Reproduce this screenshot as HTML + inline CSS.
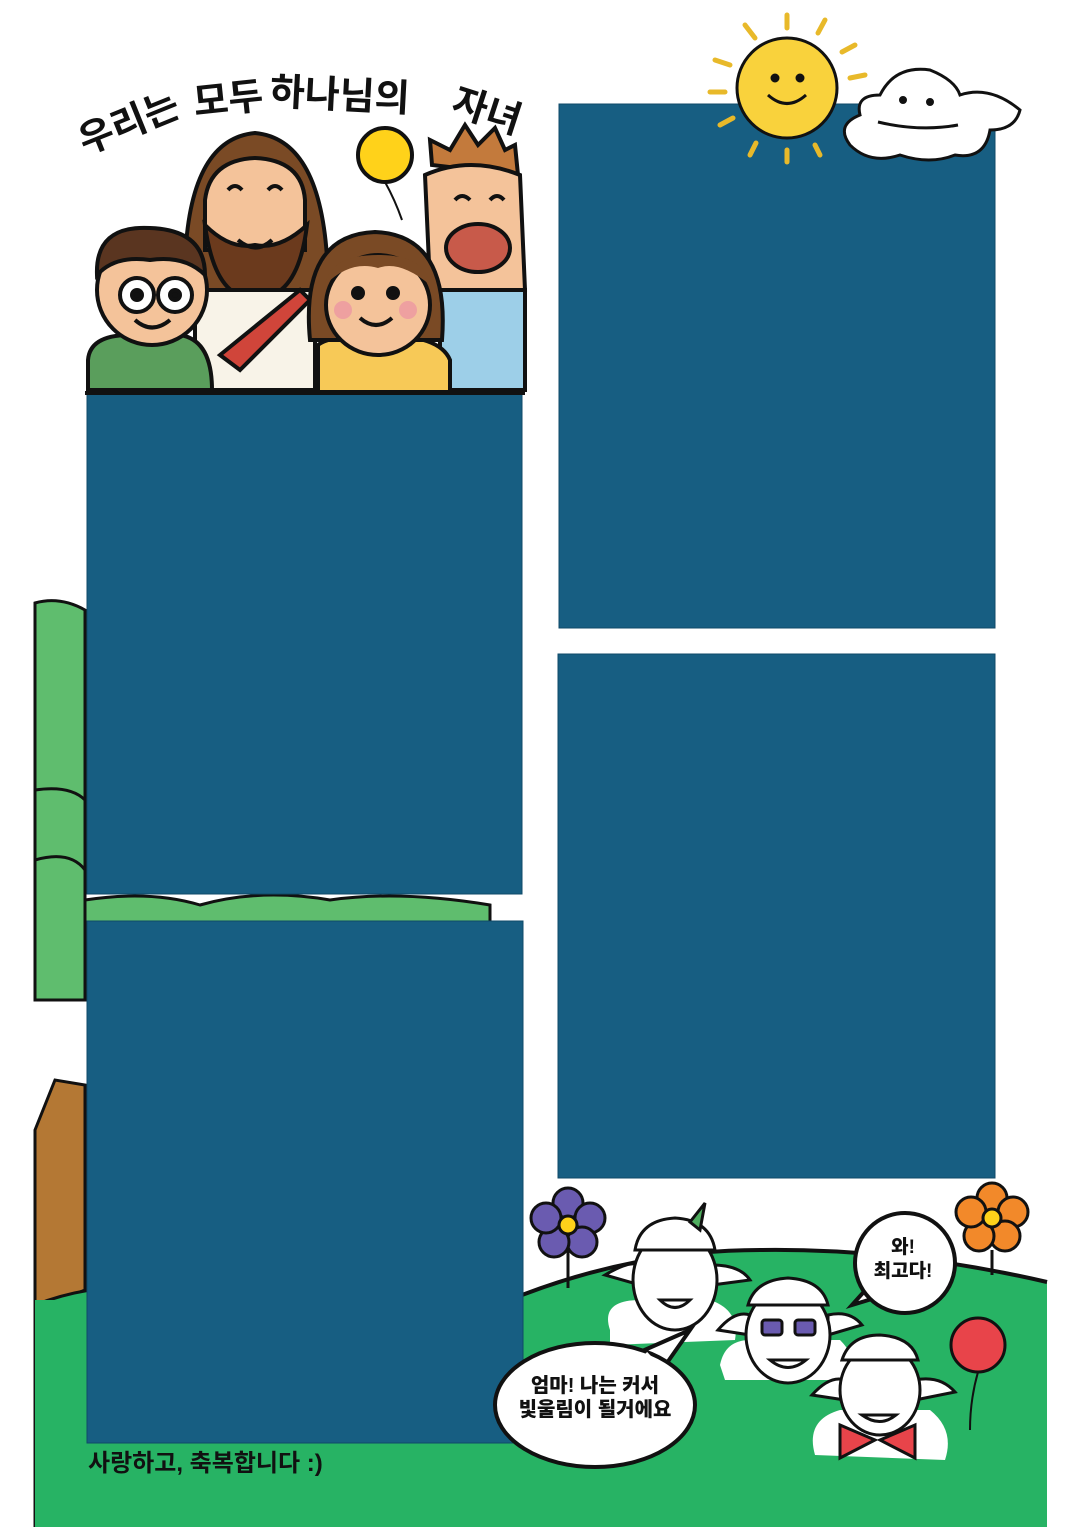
<!DOCTYPE html>
<html><head><meta charset="utf-8"><style>
html,body{margin:0;padding:0;background:#fff}
body{width:1080px;height:1527px;position:relative;overflow:hidden;font-family:"Liberation Sans","Noto Sans CJK KR",sans-serif}
.t{position:absolute;font-weight:bold;color:#111;white-space:nowrap}
</style></head><body>
<svg width="1080" height="1527" viewBox="0 0 1080 1527" style="position:absolute;left:0;top:0">
<g stroke="#111" stroke-width="3">
<path d="M35 603 Q60 596 85 610 L85 1000 L35 1000 Z" fill="#5fbd6e"/>
<path d="M35 790 Q70 785 85 800 M35 860 Q70 850 85 870" fill="none"/>
<path d="M85 900 Q150 890 200 905 Q260 888 330 900 Q400 890 490 905 L490 925 L85 925 Z" fill="#5fbd6e"/>
<path d="M35 1130 L55 1080 L85 1085 L85 1290 L35 1310 Z" fill="#b47834"/>
</g>
<path d="M35 1305 Q60 1295 90 1290 L90 1527 L35 1527 Z" fill="#27b364" stroke="#111" stroke-width="3"/>
<rect x="35" y="1300" width="500" height="227" fill="#27b364"/>
<path d="M522 1295 Q640 1250 760 1250 Q900 1248 1047 1282 L1047 1527 L522 1527 Z" fill="#27b364"/>
<path d="M522 1295 Q640 1250 760 1250 Q900 1248 1047 1282" fill="none" stroke="#111" stroke-width="4"/>
<g fill="#175e82" stroke="#0f4a68" stroke-width="1">
<rect x="87" y="393" width="435" height="501"/>
<rect x="87" y="921" width="436" height="522"/>
<rect x="559" y="104" width="436" height="524"/>
<rect x="558" y="654" width="437" height="524"/>
</g>
<g stroke="#111" stroke-width="4">
<circle cx="385" cy="155" r="27" fill="#ffd21a"/>
<path d="M385 182 Q395 200 402 220" fill="none" stroke-width="2"/>
<path d="M185 300 Q180 140 255 133 Q330 140 328 300 Z" fill="#7a4a25"/>
<path d="M205 200 Q210 160 255 158 Q302 160 305 200 L305 250 L205 250 Z" fill="#f4c39a"/>
<path d="M205 225 Q215 300 255 298 Q298 300 307 225 Q280 250 255 245 Q230 250 205 225Z" fill="#6b3a1d"/>
<path d="M195 290 L315 290 L315 390 L195 390 Z" fill="#f8f3e8"/>
<path d="M300 290 L220 355 L240 370 L310 300 Z" fill="#d0453a"/>
<path d="M432 165 L430 140 L450 150 L465 125 L478 145 L495 128 L505 150 L515 145 L518 175 Z" fill="#c37a3c"/>
<path d="M425 175 Q470 155 520 175 L525 290 Q470 310 430 285 Z" fill="#f4c39a"/>
<ellipse cx="478" cy="248" rx="32" ry="24" fill="#c85a4a"/>
<path d="M440 290 L525 290 L525 390 L440 390 Z" fill="#9dcfe8"/>
<path d="M88 360 Q90 335 130 335 L180 335 Q212 340 212 390 L88 390 Z" fill="#5a9e5c"/>
<circle cx="152" cy="290" r="55" fill="#f4c39a"/>
<path d="M97 275 Q95 225 150 228 Q205 230 205 275 Q185 255 150 260 Q115 255 97 275Z" fill="#5a3520"/>
<circle cx="137" cy="295" r="17" fill="#fff"/><circle cx="175" cy="295" r="17" fill="#fff"/>
<circle cx="137" cy="295" r="5" fill="#111"/><circle cx="175" cy="295" r="5" fill="#111"/>
<path d="M135 320 Q152 335 170 320" fill="none"/>
<path d="M318 345 Q330 335 380 335 Q440 335 450 360 L450 392 L318 392 Z" fill="#f7c957"/>
<path d="M310 340 Q300 235 375 232 Q450 235 442 340 Z" fill="#7a4a25"/>
<ellipse cx="378" cy="305" rx="52" ry="50" fill="#f4c39a"/>
<path d="M325 285 Q330 255 378 255 Q425 255 430 285 Q400 260 378 268 Q350 260 325 285Z" fill="#7a4a25" stroke="none"/>
<circle cx="358" cy="293" r="5" fill="#111"/><circle cx="393" cy="293" r="5" fill="#111"/>
<circle cx="343" cy="310" r="9" fill="#eea0a0" stroke="none"/><circle cx="408" cy="310" r="9" fill="#eea0a0" stroke="none"/>
<path d="M360 318 Q376 332 392 318" fill="none"/>
<path d="M228 190 Q235 182 242 190 M268 190 Q275 182 282 190 M238 240 Q256 255 272 240" fill="none"/>
<path d="M455 200 Q462 192 470 200 M490 200 Q497 192 504 200" fill="none"/>
</g>
<path d="M85 393 L525 393" stroke="#111" stroke-width="4"/>
<g stroke="#111" stroke-width="3">
<g stroke="#e8b92a" stroke-width="5" stroke-linecap="round">
<line x1="787" y1="15" x2="787" y2="28"/><line x1="745" y1="25" x2="755" y2="38"/><line x1="825" y1="20" x2="818" y2="33"/>
<line x1="715" y1="60" x2="730" y2="65"/><line x1="710" y1="92" x2="725" y2="92"/><line x1="720" y1="125" x2="733" y2="118"/>
<line x1="750" y1="155" x2="756" y2="143"/><line x1="787" y1="162" x2="787" y2="150"/><line x1="820" y1="155" x2="815" y2="145"/>
<line x1="855" y1="45" x2="842" y2="52"/><line x1="865" y1="75" x2="850" y2="78"/>
</g>
<circle cx="787" cy="88" r="50" fill="#f9d23c"/>
<path d="M768 95 Q787 112 806 95" fill="none"/>
<circle cx="775" cy="78" r="3" fill="#111"/><circle cx="800" cy="78" r="3" fill="#111"/>
<path d="M850 145 Q835 125 860 115 Q855 95 880 95 Q895 65 930 70 Q955 80 960 95 Q990 85 1020 110 Q1015 130 990 130 Q985 160 955 155 Q930 165 900 155 Q870 165 850 145Z" fill="#fff"/>
<circle cx="903" cy="100" r="2.5" fill="#111"/><circle cx="930" cy="102" r="2.5" fill="#111"/>
<path d="M878 122 Q920 132 958 125" fill="none"/>
</g>
<g stroke="#111" stroke-width="3">
<line x1="568" y1="1240" x2="568" y2="1288"/>
<g fill="#6a5bb0"><circle cx="568" cy="1203" r="15"/><circle cx="590" cy="1218" r="15"/><circle cx="582" cy="1242" r="15"/><circle cx="554" cy="1242" r="15"/><circle cx="546" cy="1218" r="15"/></g>
<circle cx="568" cy="1225" r="9" fill="#ffd21a"/>
<line x1="992" y1="1250" x2="992" y2="1275"/>
<g fill="#f2892a"><circle cx="992" cy="1198" r="15"/><circle cx="1013" cy="1212" r="15"/><circle cx="1005" cy="1236" r="15"/><circle cx="979" cy="1236" r="15"/><circle cx="971" cy="1212" r="15"/></g>
<circle cx="992" cy="1218" r="9" fill="#ffd21a"/>
</g>
<g stroke="#111" stroke-width="3" fill="#fff">
<path d="M610 1330 Q600 1300 640 1300 L710 1300 Q740 1310 735 1340 L610 1345Z" stroke="none"/>
<path d="M605 1275 Q630 1260 640 1265 L640 1285Z"/><path d="M712 1265 Q740 1265 750 1280 L712 1285Z"/>
<ellipse cx="675" cy="1280" rx="42" ry="50"/>
<path d="M635 1250 Q640 1220 675 1218 Q710 1220 715 1250 Z"/>
<path d="M690 1222 L705 1203 L700 1230 Z" fill="#4fae5f"/>
<path d="M720 1365 Q725 1340 750 1340 L840 1340 Q860 1360 850 1380 L725 1380Z" stroke="none"/>
<path d="M718 1330 Q735 1310 750 1315 L750 1335Z"/><path d="M828 1315 Q850 1310 862 1325 L828 1335Z"/>
<ellipse cx="788" cy="1335" rx="42" ry="48"/>
<path d="M748 1305 Q755 1280 788 1278 Q822 1280 828 1305 Z"/>
<rect x="762" y="1320" width="20" height="15" rx="3" fill="#6a5bb0"/><rect x="795" y="1320" width="20" height="15" rx="3" fill="#6a5bb0"/>
<path d="M815 1455 Q805 1420 840 1410 L930 1410 Q955 1430 945 1460 Z" stroke="none"/>
<path d="M812 1395 Q830 1375 845 1380 L845 1400Z"/><path d="M915 1380 Q940 1375 955 1392 L915 1400Z"/>
<ellipse cx="880" cy="1390" rx="40" ry="45"/>
<path d="M842 1360 Q850 1335 880 1335 Q912 1337 918 1360 Z"/>
<path d="M840 1425 L875 1440 L840 1458 Z M915 1425 L880 1440 L915 1458 Z" fill="#e8444a"/>
<circle cx="978" cy="1345" r="27" fill="#e8444a"/>
<path d="M978 1372 Q970 1400 970 1430" fill="none" stroke-width="2"/>
<path d="M660 1300 Q675 1315 690 1300 Z M770 1360 Q788 1375 806 1360 Z M862 1415 Q880 1428 896 1415 Z"/>
</g>
<g stroke="#111" stroke-width="4" fill="#fff">
<path d="M640 1352 L690 1330 L662 1370 Z"/>
<ellipse cx="595" cy="1405" rx="100" ry="62"/>
<path d="M870 1285 L852 1305 L885 1295 Z"/>
<circle cx="905" cy="1263" r="50"/>
</g>
<path d="M645 1354 L660 1370" stroke="#fff" stroke-width="6"/>
</svg>
<div class="t" style="left:75px;top:50px;width:470px;height:90px">
<span style="position:absolute;left:0;top:42px;font-size:38px;transform:rotate(-22deg)">우리는</span>
<span style="position:absolute;left:118px;top:18px;font-size:38px;transform:rotate(-6deg)">모두</span>
<span style="position:absolute;left:195px;top:14px;font-size:38px;transform:rotate(3deg)">하나님의</span>
<span style="position:absolute;left:378px;top:30px;font-size:38px;transform:rotate(18deg)">자녀</span>
</div>
<div class="t" style="left:88px;top:1443px;font-size:24px">사랑하고, 축복합니다 :)</div>
<div class="t" style="left:510px;top:1374px;font-size:20px;line-height:24px;text-align:center;width:170px;font-weight:900">엄마! 나는 커서<br>빛울림이 될거에요</div>
<div class="t" style="left:858px;top:1236px;font-size:19px;line-height:24px;text-align:center;width:90px;font-weight:900">와!<br>최고다!</div>
</body></html>
